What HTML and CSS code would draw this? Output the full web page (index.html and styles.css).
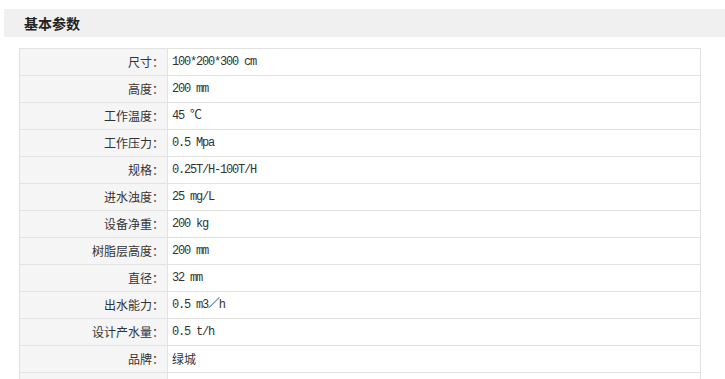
FILE: index.html
```html
<!DOCTYPE html>
<html lang="zh-CN">
<head>
<meta charset="utf-8">
<title>基本参数</title>
<link rel="stylesheet" href="styles.css">
</head>
<body>
<div class="section-title">基本参数</div>
<table class="params">
  <tbody>
    <tr><th>尺寸：</th><td>100*200*300 cm</td></tr>
    <tr><th>高度：</th><td>200 mm</td></tr>
    <tr><th>工作温度：</th><td>45 ℃</td></tr>
    <tr><th>工作压力：</th><td>0.5 Mpa</td></tr>
    <tr><th>规格：</th><td>0.25T/H-100T/H</td></tr>
    <tr><th>进水浊度：</th><td>25 mg/L</td></tr>
    <tr><th>设备净重：</th><td>200 kg</td></tr>
    <tr><th>树脂层高度：</th><td>200 mm</td></tr>
    <tr><th>直径：</th><td>32 mm</td></tr>
    <tr><th>出水能力：</th><td>0.5 m3／h</td></tr>
    <tr><th>设计产水量：</th><td>0.5 t/h</td></tr>
    <tr><th>品牌：</th><td class="cjk">绿城</td></tr>
    <tr><th>&nbsp;</th><td>&nbsp;</td></tr>
  </tbody>
</table>
</body>
</html>
```

FILE: styles.css
```css
html, body {
  margin: 0;
  padding: 0;
  background: #ffffff;
}

body {
  font-family: "Noto Sans CJK SC", "Liberation Sans", sans-serif;
  color: #333333;
  overflow: hidden;
}

.section-title {
  margin: 9px 0 0 4px;
  height: 28px;
  line-height: 28px;
  padding-left: 20px;
  background: #f0f0f0;
  font-size: 14px;
  font-weight: bold;
  color: #222222;
}

.params {
  margin: 11px 0 0 19px;
  width: 682px;
  border-collapse: collapse;
  table-layout: fixed;
}

.params th,
.params td {
  height: 26px;
  padding: 0 4px;
  border: 1px solid #e2e2e2;
  font-size: 12px;
  line-height: 26px;
  vertical-align: middle;
  white-space: nowrap;
}

.params th {
  width: 140px;
  text-align: right;
  font-weight: normal;
  background: #f5f5f5;
  padding-right: 3px;
}

.params td {
  text-align: left;
  background: #ffffff;
  font-family: "Liberation Mono", "Noto Sans CJK SC", monospace;
  letter-spacing: -1.2px;
}

.params td.cjk {
  font-family: "Noto Sans CJK SC", sans-serif;
  letter-spacing: 0;
}
```
